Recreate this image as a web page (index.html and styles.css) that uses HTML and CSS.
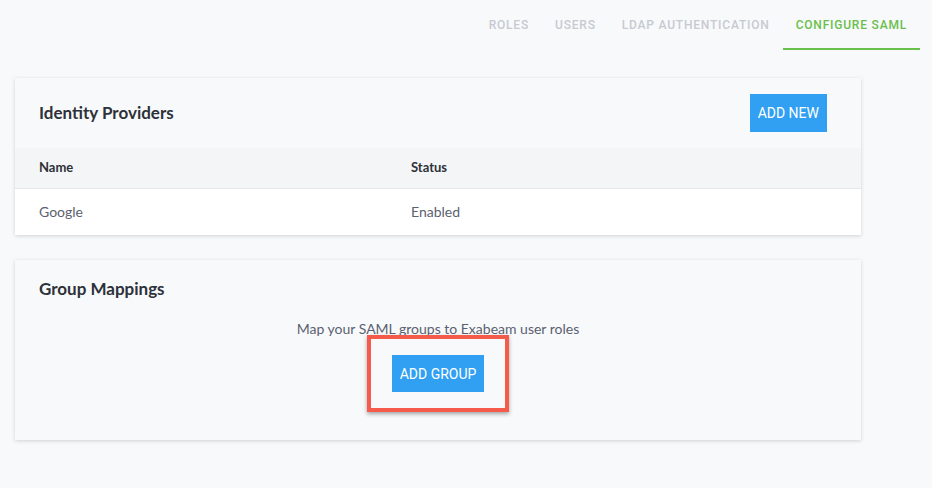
FILE: index.html
```html
<!DOCTYPE html>
<html lang="en">

<head>
    <meta charset="UTF-8">
    <meta name="viewport" content="width=device-width, initial-scale=1.0">
    <title>Configure SAML</title>
    <link rel="stylesheet" href="styles.css">
</head>

<body>
    <nav class="tabs">
        <a class="tab">ROLES</a>
        <a class="tab">USERS</a>
        <a class="tab">LDAP AUTHENTICATION</a>
        <a class="tab active">CONFIGURE SAML</a>
    </nav>

    <main class="content">
        <section class="card">
            <div class="card-header">
                <h2 class="card-title">Identity Providers</h2>
                <button class="btn">ADD NEW</button>
            </div>
            <div class="table">
                <div class="row head">
                    <div class="cell name">Name</div>
                    <div class="cell">Status</div>
                </div>
                <div class="row">
                    <div class="cell name">Google</div>
                    <div class="cell">Enabled</div>
                </div>
            </div>
        </section>

        <section class="card mappings">
            <h2 class="card-title">Group Mappings</h2>
            <p class="hint">Map your SAML groups to Exabeam user roles</p>
            <div class="highlight">
                <button class="btn">ADD GROUP</button>
            </div>
        </section>
    </main>
</body>

</html>
```

FILE: styles.css
```css
body {
    margin: 0;
    font-family: "Source Sans Pro", Lato, "Open Sans", sans-serif;
    background-color: #f8f9fb;
    color: #2d3139;
}

.tabs {
    display: flex;
    justify-content: flex-end;
    padding: 0 12px 0 0;
    height: 50px;
}

.tab {
    display: flex;
    align-items: center;
    padding: 2px 13px 0;
    font-family: Roboto, "Liberation Sans", sans-serif;
    font-weight: 500;
    font-size: 12px;
    letter-spacing: 0.8px;
    color: #c6cad1;
    border-bottom: 2px solid transparent;
    cursor: pointer;
}

.tab.active {
    color: #6abf4b;
    border-bottom-color: #6abf4b;
}

.content {
    width: 846px;
    padding: 28px 0 0 15px;
}

.card {
    background-color: #f8f9fb;
    box-shadow: 0 1px 4px rgba(0, 0, 0, 0.16);
    margin-bottom: 25px;
}

.card-header {
    display: flex;
    justify-content: space-between;
    align-items: center;
    height: 70px;
    padding: 0 34px 0 24px;
}

.card-title {
    margin: 0;
    font-size: 17px;
    font-weight: 700;
    color: #2d3139;
    position: relative;
    top: -1px;
}

.btn {
    border: none;
    background-color: #31a0f2;
    color: #fff;
    font-family: Roboto, "Liberation Sans", sans-serif;
    font-size: 14px;
    height: 38px;
    padding: 0 8px;
    cursor: pointer;
}

.row {
    display: flex;
    align-items: center;
    height: 46px;
    padding-bottom: 1px;
    box-sizing: border-box;
    background-color: #fff;
    font-size: 14px;
    color: #5a6170;
}

.row.head {
    height: 41px;
    padding-bottom: 2px;
    background-color: #f4f5f7;
    border-bottom: 1px solid #e4e7ec;
    font-weight: 700;
    color: #2d3139;
    font-size: 13px;
}

.cell {
    padding-left: 24px;
}

.cell.name {
    width: 348px;
}

.mappings {
    padding: 19px 24px 28px;
    display: flex;
    flex-direction: column;
    align-items: center;
}

.mappings .card-title {
    align-self: flex-start;
}

.hint {
    margin: 20px 0 0;
    font-size: 14px;
    color: #5a6170;
}

.highlight {
    margin-top: -2px;
    border: 4px solid #f55b4b;
    padding: 16px 21px;
    box-shadow: 0 2px 4px rgba(0, 0, 0, 0.35);
}

.highlight .btn {
    display: block;
    height: 37px;
}
```
